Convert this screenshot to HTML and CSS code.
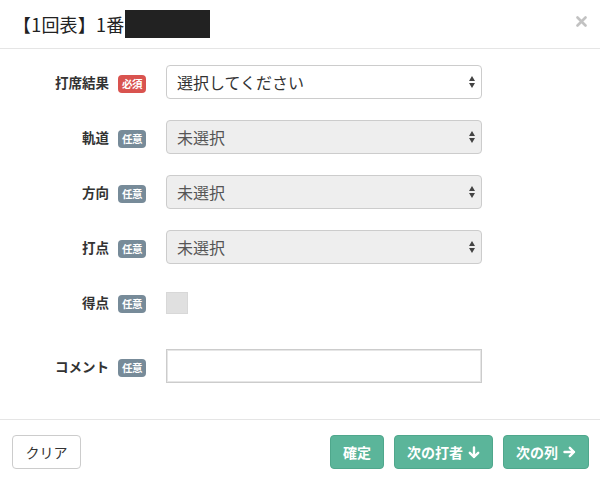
FILE: index.html
```html
<!DOCTYPE html>
<html lang="ja">
<head>
<meta charset="utf-8">
<link rel="stylesheet" href="styles.css">
</head>
<body>
<div class="modal">
  <div class="modal-header">
    <h4 class="modal-title">【1回表】1番<span class="redact"></span></h4>
    <svg class="close" width="11" height="11" viewBox="0 0 11 11"><path d="M1.5 1.5l8 8M9.5 1.5l-8 8" stroke="#c2c2c2" stroke-width="2.6" stroke-linecap="round"/></svg>
  </div>
  <div class="modal-body">
    <div class="row">
      <div class="label-col"><span class="label-text">打席結果</span><span class="badge req">必須</span></div>
      <div class="select-wrap"><div class="select white">選択してください</div><span class="arrows"></span></div>
    </div>
    <div class="row">
      <div class="label-col"><span class="label-text">軌道</span><span class="badge opt">任意</span></div>
      <div class="select-wrap"><div class="select gray">未選択</div><span class="arrows"></span></div>
    </div>
    <div class="row">
      <div class="label-col"><span class="label-text">方向</span><span class="badge opt">任意</span></div>
      <div class="select-wrap"><div class="select gray">未選択</div><span class="arrows"></span></div>
    </div>
    <div class="row">
      <div class="label-col"><span class="label-text">打点</span><span class="badge opt">任意</span></div>
      <div class="select-wrap"><div class="select gray">未選択</div><span class="arrows"></span></div>
    </div>
    <div class="row row-check">
      <div class="label-col"><span class="label-text">得点</span><span class="badge opt">任意</span></div>
      <div class="checkbox"></div>
    </div>
    <div class="row">
      <div class="label-col"><span class="label-text">コメント</span><span class="badge opt">任意</span></div>
      <div class="text-input"></div>
    </div>
  </div>
  <div class="modal-footer">
    <button class="btn btn-default">クリア</button>
    <div class="right-btns">
      <button class="btn btn-green">確定</button>
      <button class="btn btn-green">次の打者 <svg class="ico" width="12" height="13" viewBox="0 0 12 13"><path d="M6 1.5v9.5M1.8 6.8L6 11l4.2-4.2" fill="none" stroke="#fff" stroke-width="2.4" stroke-linecap="round" stroke-linejoin="round"/></svg></button>
      <button class="btn btn-green">次の列 <svg class="ico" width="13" height="12" viewBox="0 0 13 12"><path d="M1.5 6h9.5M6.8 1.8L11 6l-4.2 4.2" fill="none" stroke="#fff" stroke-width="2.4" stroke-linecap="round" stroke-linejoin="round"/></svg></button>
    </div>
  </div>
</div>
</body>
</html>
```

FILE: styles.css
```css
* { box-sizing: border-box; }
html, body {
  margin: 0;
  padding: 0;
  background: #fff;
  font-family: "Noto Sans CJK JP", "Noto Sans", "Liberation Sans", sans-serif;
  color: #333;
}
.modal {
  width: 600px;
  height: 482px;
  display: flex;
  flex-direction: column;
}
.modal-header {
  height: 49px;
  border-bottom: 1px solid #e5e5e5;
  display: flex;
  align-items: center;
  justify-content: space-between;
  padding: 0 13px 0 13px;
}
.modal-title {
  margin: 0;
  font-size: 18px;
  font-weight: 400;
  color: #222;
  display: flex;
  align-items: center;
  letter-spacing: 0.2px;
}
.redact {
  display: inline-block;
  width: 85px;
  height: 28px;
  background: #222;
  margin-left: 1px;
}
.close {
  display: block;
  margin-top: -6px;
}
.modal-body {
  padding: 16px 0 0 0;
  display: flex;
  flex-direction: column;
  gap: 21px;
  height: 370px;
}
.row {
  display: flex;
  align-items: center;
  height: 34px;
}
.row-check { margin-bottom: 9px; }
.label-col {
  width: 146px;
  display: flex;
  align-items: center;
  justify-content: flex-end;
  margin-right: 20px;
}
.label-text {
  font-size: 13.5px;
  font-weight: bold;
  color: #333;
  margin-right: 9px;
}
.badge {
  display: inline-block;
  width: 28px;
  height: 18px;
  line-height: 18px;
  border-radius: 4px;
  font-size: 10.5px;
  font-weight: bold;
  color: #fff;
  text-align: center;
  margin-top: 4px;
  letter-spacing: -0.5px;
}
.req { background: #d9534f; }
.opt { background: #778b99; }
.select-wrap {
  position: relative;
  width: 316px;
  height: 34px;
}
.select {
  height: 34px;
  border: 1px solid #ccc;
  border-radius: 4px;
  font-size: 16px;
  line-height: 32px;
  padding-left: 10px;
}
.select.white { background: #fff; color: #333; }
.select.gray { background: #eee; color: #555; }
.arrows {
  position: absolute;
  right: 6px;
  top: 11px;
  width: 7px;
  height: 12px;
}
.arrows::before, .arrows::after {
  content: "";
  position: absolute;
  left: 0;
  border-left: 3.5px solid transparent;
  border-right: 3.5px solid transparent;
}
.arrows::before { top: 0; border-bottom: 5px solid #444; }
.arrows::after { bottom: 0; border-top: 5px solid #444; }
.checkbox {
  width: 22px;
  height: 22px;
  background: #e0e0e0;
  border: 1px solid #d8d8d8;
  margin-top: 1px;
}
.text-input {
  width: 316px;
  height: 34px;
  border: 1px solid #ccc;
  box-shadow: inset 0 0 0 1px #e6e6e6;
  background: #fff;
}
.modal-footer {
  border-top: 1px solid #e5e5e5;
  display: flex;
  justify-content: space-between;
  align-items: flex-start;
  padding: 15px 11px 0 12px;
  flex: 1;
}
.right-btns {
  display: flex;
  gap: 10px;
}
.btn {
  height: 34px;
  padding: 0 12px;
  font-family: inherit;
  font-size: 14px;
  border-radius: 4px;
  display: flex;
  align-items: center;
  gap: 5px;
}
.btn-default {
  background: #fff;
  border: 1px solid #ccc;
  color: #333;
  width: 69px;
  justify-content: center;
}
.btn-green {
  background: #5bb59a;
  border: 1px solid #4fa78c;
  color: #fff;
  font-weight: bold;
}
.ico { display: block; }
```
